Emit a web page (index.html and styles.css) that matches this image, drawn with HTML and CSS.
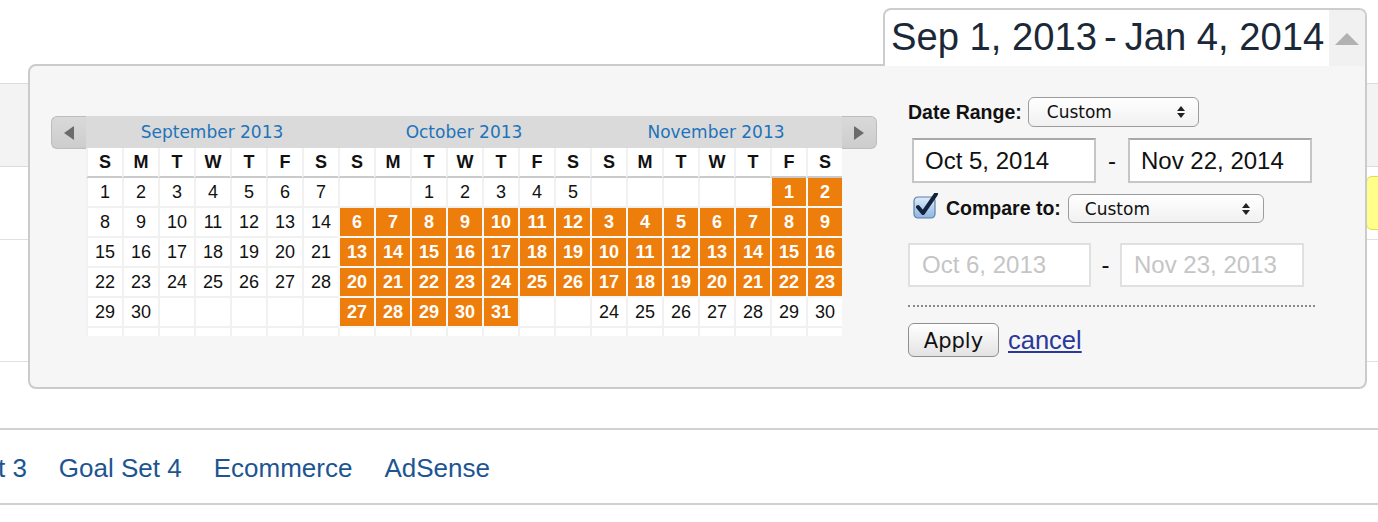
FILE: index.html
```html
<!DOCTYPE html>
<html>
<head>
<meta charset="utf-8">
<title>Date range picker</title>
<link rel="stylesheet" href="styles.css">
</head>
<body>
<div class="page">
  <div class="bg-top"></div>
  <div class="bg-band"></div>
  <div class="bg-row bg-row1"><div class="badge"></div></div>
  <div class="bg-row bg-row2"></div>
  <div class="bg-spacer"></div>
  <nav class="tabs">
    <a class="tab tab-first">Goal Set 3</a>
    <a class="tab">Goal Set 4</a>
    <a class="tab">Ecommerce</a>
    <a class="tab">AdSense</a>
  </nav>

  <div class="range-box">
    <div class="range-text">Sep 1, 2013<span class="range-dash">-</span>Jan 4, 2014</div>
    <div class="range-arrow">
      <svg width="24" height="12" viewBox="0 0 24 12"><polygon points="0,12 12,0 24,12" fill="#b2b2b2"/></svg>
    </div>
  </div>

  <div class="popup">
    <div class="calendar">
      <div class="cal-btn cal-prev">
        <svg width="10" height="14" viewBox="0 0 10 14"><polygon points="10,0 0,7 10,14" fill="#6b6b6b"/></svg>
      </div>
      <div class="months">
        <div class="month">
          <div class="month-title">September 2013</div>
          <div class="grid">
            <div class="wd">S</div><div class="wd">M</div><div class="wd">T</div><div class="wd">W</div><div class="wd">T</div><div class="wd">F</div><div class="wd">S</div>
            <div class="d">1</div><div class="d">2</div><div class="d">3</div><div class="d">4</div><div class="d">5</div><div class="d">6</div><div class="d">7</div>
            <div class="d">8</div><div class="d">9</div><div class="d">10</div><div class="d">11</div><div class="d">12</div><div class="d">13</div><div class="d">14</div>
            <div class="d">15</div><div class="d">16</div><div class="d">17</div><div class="d">18</div><div class="d">19</div><div class="d">20</div><div class="d">21</div>
            <div class="d">22</div><div class="d">23</div><div class="d">24</div><div class="d">25</div><div class="d">26</div><div class="d">27</div><div class="d">28</div>
            <div class="d">29</div><div class="d">30</div><div class="d"></div><div class="d"></div><div class="d"></div><div class="d"></div><div class="d"></div>
            <div class="d last"></div><div class="d last"></div><div class="d last"></div><div class="d last"></div><div class="d last"></div><div class="d last"></div><div class="d last"></div>
          </div>
        </div>
        <div class="month">
          <div class="month-title">October 2013</div>
          <div class="grid">
            <div class="wd">S</div><div class="wd">M</div><div class="wd">T</div><div class="wd">W</div><div class="wd">T</div><div class="wd">F</div><div class="wd">S</div>
            <div class="d"></div><div class="d"></div><div class="d">1</div><div class="d">2</div><div class="d">3</div><div class="d">4</div><div class="d">5</div>
            <div class="d sel">6</div><div class="d sel">7</div><div class="d sel">8</div><div class="d sel">9</div><div class="d sel">10</div><div class="d sel">11</div><div class="d sel">12</div>
            <div class="d sel">13</div><div class="d sel">14</div><div class="d sel">15</div><div class="d sel">16</div><div class="d sel">17</div><div class="d sel">18</div><div class="d sel">19</div>
            <div class="d sel">20</div><div class="d sel">21</div><div class="d sel">22</div><div class="d sel">23</div><div class="d sel">24</div><div class="d sel">25</div><div class="d sel">26</div>
            <div class="d sel">27</div><div class="d sel">28</div><div class="d sel">29</div><div class="d sel">30</div><div class="d sel">31</div><div class="d"></div><div class="d"></div>
            <div class="d last"></div><div class="d last"></div><div class="d last"></div><div class="d last"></div><div class="d last"></div><div class="d last"></div><div class="d last"></div>
          </div>
        </div>
        <div class="month">
          <div class="month-title">November 2013</div>
          <div class="grid">
            <div class="wd">S</div><div class="wd">M</div><div class="wd">T</div><div class="wd">W</div><div class="wd">T</div><div class="wd">F</div><div class="wd">S</div>
            <div class="d"></div><div class="d"></div><div class="d"></div><div class="d"></div><div class="d"></div><div class="d sel">1</div><div class="d sel">2</div>
            <div class="d sel">3</div><div class="d sel">4</div><div class="d sel">5</div><div class="d sel">6</div><div class="d sel">7</div><div class="d sel">8</div><div class="d sel">9</div>
            <div class="d sel">10</div><div class="d sel">11</div><div class="d sel">12</div><div class="d sel">13</div><div class="d sel">14</div><div class="d sel">15</div><div class="d sel">16</div>
            <div class="d sel">17</div><div class="d sel">18</div><div class="d sel">19</div><div class="d sel">20</div><div class="d sel">21</div><div class="d sel">22</div><div class="d sel">23</div>
            <div class="d">24</div><div class="d">25</div><div class="d">26</div><div class="d">27</div><div class="d">28</div><div class="d">29</div><div class="d">30</div>
            <div class="d last"></div><div class="d last"></div><div class="d last"></div><div class="d last"></div><div class="d last"></div><div class="d last"></div><div class="d last"></div>
          </div>
        </div>
      </div>
      <div class="cal-btn cal-next">
        <svg width="10" height="14" viewBox="0 0 10 14"><polygon points="0,0 10,7 0,14" fill="#6b6b6b"/></svg>
      </div>
    </div>

    <div class="controls">
      <div class="ctl-row row-range">
        <span class="lbl">Date Range:</span>
        <div class="select sel-range">
          <span>Custom</span>
          <svg class="updown" width="8" height="14" viewBox="0 0 8 14"><polygon points="0,6 4,1 8,6" fill="#222"/><polygon points="0,8 4,13 8,8" fill="#222"/></svg>
        </div>
      </div>
      <div class="ctl-row row-dates">
        <div class="field">Oct 5, 2014</div>
        <span class="dash">-</span>
        <div class="field">Nov 22, 2014</div>
      </div>
      <div class="ctl-row row-compare">
        <svg class="check" width="26" height="26" viewBox="0 0 26 26">
          <defs><linearGradient id="cb" x1="0" y1="0" x2="0" y2="1"><stop offset="0" stop-color="#dcebfa"/><stop offset="1" stop-color="#8db5e2"/></linearGradient></defs>
          <rect x="1" y="4" width="21" height="21" rx="4" fill="url(#cb)" stroke="#5f7fa6" stroke-width="1.2"/>
          <path d="M5 14 L10 20 L23 1" fill="none" stroke="#13233d" stroke-width="4" stroke-linejoin="round" stroke-linecap="round"/>
        </svg>
        <span class="lbl">Compare to:</span>
        <div class="select sel-compare">
          <span>Custom</span>
          <svg class="updown" width="8" height="14" viewBox="0 0 8 14"><polygon points="0,6 4,1 8,6" fill="#222"/><polygon points="0,8 4,13 8,8" fill="#222"/></svg>
        </div>
      </div>
      <div class="ctl-row row-cmpdates">
        <div class="field disabled">Oct 6, 2013</div>
        <span class="dash dash2">-</span>
        <div class="field disabled f2">Nov 23, 2013</div>
      </div>
      <div class="dotted"></div>
      <div class="ctl-row row-actions">
        <button class="apply">Apply</button>
        <a class="cancel">cancel</a>
      </div>
    </div>
  </div>
</div>
</body>
</html>
```

FILE: styles.css
```css
html, body {
  margin: 0;
  padding: 0;
}
body {
  width: 1378px;
  height: 522px;
  overflow: hidden;
  background: #ffffff;
  font-family: "Liberation Sans", Arial, sans-serif;
  color: #111;
}
.page {
  position: relative;
  width: 1378px;
  height: 522px;
  overflow: hidden;
}

/* background page */
.bg-top { height: 83px; }
.bg-band {
  height: 82px;
  background: #f3f3f3;
  border-top: 1px solid #dcdcdc;
  border-bottom: 1px solid #dcdcdc;
}
.bg-row {
  border-bottom: 1px solid #e0e0e0;
}
.bg-row1 {
  height: 72px;
  display: flex;
  justify-content: flex-end;
  align-items: center;
}
.badge {
  width: 20px;
  height: 52px;
  margin-right: -10px;
  background: #ffff8a;
  border: 1px solid #dede55;
  border-radius: 6px;
}
.bg-row2 { height: 121px; }
.bg-spacer { height: 66px; }
.tabs {
  height: 70px;
  border-top: 2px solid #d2d2d2;
  border-bottom: 2px solid #d2d2d2;
  display: flex;
  align-items: center;
  gap: 32px;
  padding-top: 3px;
  box-sizing: content-box;
}
.tab {
  font-size: 26px;
  color: #1c5592;
  white-space: nowrap;
}
.tab-first { margin-left: -96px; }

/* date range box */
.range-box {
  position: absolute;
  left: 883px;
  top: 8px;
  width: 484px;
  height: 58px;
  box-sizing: border-box;
  border: 2px solid #cdcdcd;
  border-bottom: none;
  border-radius: 8px 8px 0 0;
  background: #fff;
  display: flex;
  z-index: 2;
}
.range-text {
  flex: 1;
  padding-left: 6px;
  font-size: 38.2px;
  line-height: 54px;
  color: #1b2838;
  white-space: nowrap;
}
.range-dash {
  margin: 0 8px 0 7px;
}
.range-arrow {
  width: 36px;
  background: #f1f1f1;
  border-top-right-radius: 6px;
  display: flex;
  align-items: center;
  justify-content: center;
  padding-top: 2px;
}

/* popup */
.popup {
  position: absolute;
  left: 28px;
  top: 64px;
  width: 1339px;
  height: 325px;
  box-sizing: border-box;
  border: 2px solid #cbcbcb;
  border-radius: 8px 0 8px 8px;
  background: #f6f6f6;
  display: flex;
  align-items: flex-start;
  z-index: 1;
}

.calendar {
  display: flex;
  align-items: flex-start;
  margin-top: 50px;
  margin-left: 21px;
}
.cal-btn {
  width: 35px;
  height: 33px;
  box-sizing: border-box;
  background: linear-gradient(#d9d9d9, #cdcdcd);
  border: 1px solid #bdbdbd;
  display: flex;
  align-items: center;
  justify-content: center;
}
.cal-prev { border-radius: 6px 0 0 6px; border-right: none; }
.cal-next { border-radius: 0 6px 6px 0; border-left: none; }
.months {
  display: flex;
  width: 756px;
}
.month { width: 252px; }
.month-title {
  height: 32px;
  line-height: 32px;
  background: #dadada;
  text-align: center;
  font-family: "DejaVu Sans", sans-serif;
  font-size: 17px;
  color: #1e73ba;
}
.grid {
  display: grid;
  grid-template-columns: repeat(7, 36px);
}
.wd, .d {
  box-sizing: border-box;
  border-left: 2px solid #f1f1f1;
  background: #fff;
  text-align: center;
}
.wd {
  height: 30px;
  line-height: 28px;
  border-bottom: 2px solid #cacaca;
  font-weight: bold;
  font-size: 18px;
  color: #111;
}
.d {
  height: 30px;
  line-height: 28px;
  border-bottom: 2px solid #f1f1f1;
  font-size: 18px;
  color: #111;
}
.d.sel {
  background: #ee7e0c;
  color: #fff;
  font-weight: bold;
  border-color: #f8f8f8;
}
.d.last {
  height: 8px;
  border-bottom: none;
}

/* controls */
.controls {
  margin-left: 31px;
  margin-top: 31px;
  width: 410px;
  display: flex;
  flex-direction: column;
}
.ctl-row {
  display: flex;
  align-items: center;
}
.lbl {
  font-weight: bold;
  font-size: 19.5px;
  color: #111;
  white-space: nowrap;
}
.select {
  position: relative;
  box-sizing: border-box;
  border: 1px solid #9c9c9c;
  border-radius: 6px;
  background: linear-gradient(#ffffff, #f1f1f1);
  font-family: "DejaVu Sans", sans-serif;
  font-size: 17px;
  color: #111;
  display: flex;
  align-items: center;
  justify-content: space-between;
  padding: 0 13px 0 18px;
}
.sel-range {
  width: 171px;
  height: 30px;
  margin-left: 6px;
}
.sel-compare {
  width: 196px;
  height: 29px;
  margin-left: 7px;
  padding-left: 16px;
}
.row-dates {
  margin-top: 11px;
  padding-left: 4px;
}
.field {
  width: 184px;
  height: 45px;
  box-sizing: border-box;
  border: 2px solid #c6c6c6;
  border-top-color: #a9a9a9;
  background: #fff;
  font-size: 24px;
  line-height: 41px;
  padding-left: 11px;
  color: #111;
  white-space: nowrap;
}
.dash {
  width: 32px;
  text-align: center;
  font-size: 24px;
  color: #111;
}
.row-compare {
  margin-top: 11px;
  padding-left: 5px;
}
.check {
  margin-top: -6px;
  margin-right: 7px;
}
.row-cmpdates { margin-top: 20px; }
.field.disabled {
  width: 183px;
  height: 44px;
  border: 2px solid #e0e0e0;
  color: #c5c5c5;
  padding-left: 12px;
  line-height: 40px;
}
.field.disabled.f2 { width: 184px; }
.dash2 { width: 29px; }
.dotted {
  margin-top: 18px;
  width: 407px;
  border-top: 2px dotted #8a8a8a;
}
.row-actions { margin-top: 16px; }
.apply {
  width: 91px;
  height: 34px;
  box-sizing: border-box;
  border: 1px solid #8f8f8f;
  border-radius: 6px;
  background: linear-gradient(#ffffff, #e3e3e3);
  font-family: "DejaVu Sans", sans-serif;
  font-size: 21px;
  color: #111;
  padding: 2px 0 0 0;
  line-height: 30px;
}
.cancel {
  margin-left: 9px;
  font-size: 25.5px;
  color: #29399b;
  text-decoration: underline;
  cursor: pointer;
}
```
